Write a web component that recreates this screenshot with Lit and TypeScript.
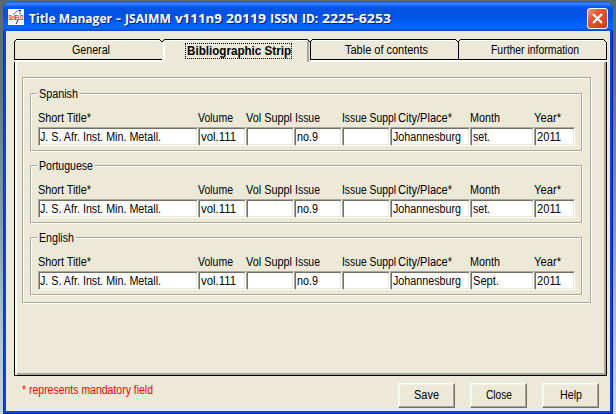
import { LitElement, html, svg, css } from "lit";
import { customElement, property } from "lit/decorators.js";
import { classMap } from "lit/directives/class-map.js";

/** One line of text, condensed or widened to an exact width. */
@customElement("fit-text")
class FitText extends LitElement {
  @property() text = "";
  @property({ type: Number }) w = 40;
  static styles = css`
    :host { display: block; flex: none; height: 14px; }
    svg { display: block; height: 14px; overflow: visible; }
    text { fill: currentColor; font: inherit; }
  `;
  render() {
    return html`<svg width=${this.w} height="14">
      ${svg`<text x="0" y="11" textLength=${this.w} lengthAdjust="spacingAndGlyphs">${this.text}</text>`}
    </svg>`;
  }
}

/** Tab header with cut upper corners. */
@customElement("tab-header")
class TabHeader extends LitElement {
  @property() text = "";
  @property({ type: Number }) w = 40;
  @property({ type: Boolean }) active = false;
  static styles = css`
    :host { display: block; height: 23px; }
    .tab { display: grid; justify-items: center; height: 23px; }
    .shape, .label { grid-area: 1 / 1; }
    .shape { display: block; width: 149px; height: 23px; }
    .label { margin-top: 4px; height: 14px; padding: 0 0 0 4px; }
    .active .label { outline: 1px dotted #000; font-weight: bold; margin-top: 5px; padding: 0 0 0 1px; margin-left: 4px; }
  `;
  render() {
    const a = this.active;
    return html`<div class=${classMap({ tab: true, active: a })}>
      <svg class="shape" viewBox="0 0 149 23" shape-rendering="crispEdges">
        ${a
          ? svg`<path d="M0 23V3L3 0H146L149 3V23Z" fill="#ece9d8"/>
              <path d="M1 3h2v20H1zM3 1h142v1H3z" fill="#fff"/>
              <path d="M145 2h2v21h-2z" fill="#aca899"/>
              <path d="M2 0h144v1H2zM1 1h1v1H1zM0 2h1v1H0zM146 1h1v1h-1zM147 2h1v1h-1z"/>`
          : svg`<path d="M2 0h144v1H2zM1 1h1v1H1zM0 2h1v19H0zM146 1h1v1h-1zM147 2h1v1h-1zM148 3h1v18h-1zM0 20h149v1H0z"/>
              <path d="M2 1h143v1H2zM1 21h148v2H1z" fill="#fff"/>`}
      </svg>
      <fit-text class="label" .text=${this.text} .w=${this.w}></fit-text>
    </div>`;
  }
}

interface Cell { text: string; w: number; }

const titleWords: Cell[] = [
  { text: "Title Manager", w: 83 },
  { text: "-", w: 5 },
  { text: "JSAIMM", w: 46 },
  { text: "v111n9", w: 47 },
  { text: "20119", w: 40 },
  { text: "ISSN", w: 28 },
  { text: "ID:", w: 16 },
  { text: "2225-6253", w: 69 },
];

const labels: Cell[] = [
  { text: "Short Title*", w: 53 },
  { text: "Volume", w: 35 },
  { text: "Vol Suppl", w: 46 },
  { text: "Issue", w: 25 },
  { text: "Issue Suppl", w: 54 },
  { text: "City/Place*", w: 54 },
  { text: "Month", w: 30 },
  { text: "Year*", w: 27 },
];

const values = (month: Cell): Cell[] => [
  { text: "J. S. Afr. Inst. Min. Metall.", w: 121 },
  { text: "vol.111", w: 35 },
  { text: "", w: 0 },
  { text: "no.9", w: 21 },
  { text: "", w: 0 },
  { text: "Johannesburg", w: 68 },
  month,
  { text: "2011", w: 24 },
];

const groups = [
  { name: { text: "Spanish", w: 39 }, month: { text: "set.", w: 17 } },
  { name: { text: "Portuguese", w: 54 }, month: { text: "set.", w: 17 } },
  { name: { text: "English", w: 35 }, month: { text: "Sept.", w: 26 } },
];

@customElement("app-root")
class AppRoot extends LitElement {
  static styles = css`
    :host {
      display: block; box-sizing: border-box; width: 616px; height: 414px; padding: 2px 3px 0;
      overflow: hidden; color: #000; font: 12px "Liberation Sans", Arial, sans-serif;
      background: linear-gradient(#58686f 0, #64757f 20%, #8497a7 50%, #b3c3d0 80%, #c6d4df 100%);
    }
    * { box-sizing: border-box; }
    .window {
      display: flex; flex-direction: column; width: 610px; height: 412px;
      border-radius: 7px 7px 0 0; background: #0046e0; overflow: hidden;
      box-shadow: inset -1px -1px #001ea0, inset 1px 0 #0831d9;
    }
    .titlebar {
      display: flex; align-items: flex-start; height: 29px; padding: 7px 4px 0 5px; color: #fff;
      font: bold 13px "Open Sans", "Noto Sans", sans-serif; text-shadow: 1px 1px #0a1883;
      background: linear-gradient(#0a4fd0 0, #3a94ff 5%, #1a70f5 11%, #0054e3 20%, #0052e0 45%, #005cf5 68%, #0068ff 86%, #0060f4 94%, #0040c8 100%);
    }
    .logo { width: 16px; height: 16px; flex: none; overflow: visible; }
    .logo text { font: bold 7px "Liberation Sans", sans-serif; fill: #f00000; text-shadow: none; }
    .title { display: flex; gap: 4px; margin: 3px auto 0 5px; }
    .close { width: 21px; height: 21px; flex: none; margin: -1px 1px 0 0; }
    .client {
      display: flex; flex-direction: column; height: 380px; margin: 0 3px;
      background: #ece9d8; padding: 8px 0 0 8px;
    }
    .tabs { display: flex; width: 593px; height: 23px; flex: none; position: relative; }
    .tabs tab-header { width: 148px; }
    .page {
      width: 593px; height: 314px; flex: none; padding: 15px 0 0 5px;
      border: 1px solid #000; border-top: 0;
      box-shadow: inset 2px 0 #fff, inset -2px -2px #aca899;
    }
    .outer { width: 569px; height: 226px; padding: 8px 0 0 6px; margin-left: 2px; }
    .etched { border: 1px solid #aca899; box-shadow: 1px 1px #fff, inset 1px 1px #fff; }
    .group { width: 552px; height: 58px; margin: 7px 0 14px 1px; padding: 0 0 0 7px; }
    .caption { display: inline-block; vertical-align: top; padding: 0 2px; margin: -7px 0 0 -1px; background: #ece9d8; }
    .labels, .fields { display: grid; grid-template-columns: 160px 48px 48px 48px 48px 80px 64px 41px; }
    .labels { height: 16px; }
    .c5 { margin-left: 8px; }
    .c3 { margin-left: 1px; }
    .heading { height: 17px; display: flex; }
    .field {
      height: 19px; background: #fff; padding: 2px 0 0 2px;
      border: 1px solid; border-color: #aca899 #fff #fff #aca899;
      box-shadow: inset 1px 1px #716f64, inset -1px -1px #ece9d8;
    }
    .field:first-child { padding-left: 1px; }
    .footer { display: flex; padding: 7px 11px 0 8px; gap: 15px; }
    .note { color: #f00; margin: 0 auto 0 0; }
    .button {
      display: flex; justify-content: center; width: 57px; height: 25px; padding-top: 4px;
      border: 1px solid; border-color: #fff #716f64 #716f64 #fff;
      box-shadow: inset -1px -1px #aca899, inset 1px 1px #f6f4ea;
    }
  `;

  private cell(c: Cell) {
    return html`<fit-text .text=${c.text} .w=${c.w}></fit-text>`;
  }

  render() {
    return html`<div class="window">
      <div class="titlebar">
        <svg class="logo" viewBox="0 0 16 16">
          <path d="M0 0h16v16H0z" fill="#fff"/>
          <path d="M5 6L8 3L11 1L12 2V6" fill="none" stroke="#777"/>
          <path d="M11 1.5h2M10 11L8 15" fill="none" stroke="#222"/>
          <text x=".5" y="11" textLength="15" lengthAdjust="spacingAndGlyphs">SciELO</text>
        </svg>
        <div class="title">${titleWords.map((w) => this.cell(w))}</div>
        <svg class="close" viewBox="0 0 21 21">
          <defs><linearGradient id="red" x2="1" y2="1">
            <stop stop-color="#f0a080"/><stop offset=".35" stop-color="#e05a35"/><stop offset="1" stop-color="#c83a10"/>
          </linearGradient></defs>
          <rect x=".5" y=".5" width="20" height="20" rx="2.5" fill="url(#red)" stroke="#fff"/>
          <path d="M6 6l9 9M15 6l-9 9" stroke="#fff" stroke-width="2.2"/>
        </svg>
      </div>
      <div class="client">
        <div class="tabs">
          <tab-header .text=${"General"} .w=${38}></tab-header>
          <tab-header .text=${"Bibliographic Strip"} .w=${104} active></tab-header>
          <tab-header .text=${"Table of contents"} .w=${83}></tab-header>
          <tab-header .text=${"Further information"} .w=${88}></tab-header>
        </div>
        <div class="page">
          <div class="outer etched">
            ${groups.map((g) => html`<div class="group etched">
              <div class="heading"><div class="caption">${this.cell(g.name)}</div></div>
              <div class="labels">${labels.map((l, i) => html`<div class="c${i}">${this.cell(l)}</div>`)}</div>
              <div class="fields">${values(g.month).map((v) => html`<div class="field">${this.cell(v)}</div>`)}</div>
            </div>`)}
          </div>
        </div>
        <div class="footer">
          <div class="note">${this.cell({ text: "* represents mandatory field", w: 131 })}</div>
          <div class="button">${this.cell({ text: "Save", w: 25 })}</div>
          <div class="button">${this.cell({ text: "Close", w: 26 })}</div>
          <div class="button">${this.cell({ text: "Help", w: 22 })}</div>
        </div>
      </div>
    </div>`;
  }
}
